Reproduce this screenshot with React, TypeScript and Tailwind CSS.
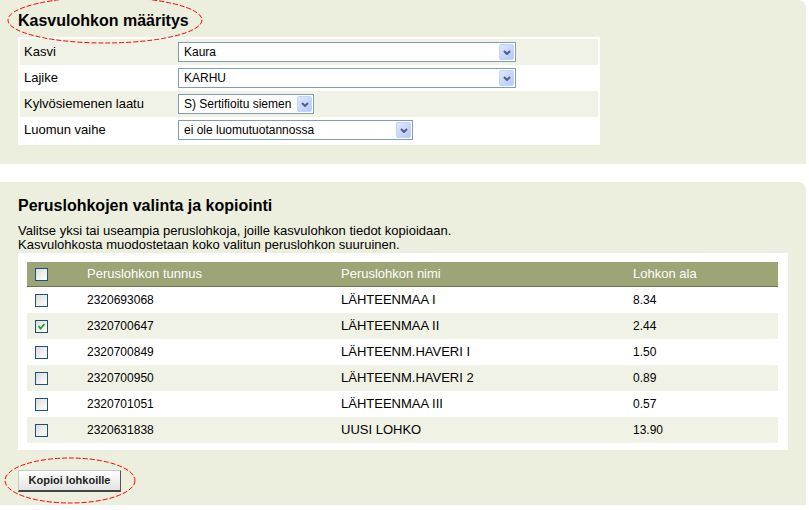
import { Fragment } from "react";

const fields = [
  { label: "Kasvi", value: "Kaura", w: "w-[338px]" },
  { label: "Lajike", value: "KARHU", w: "w-[338px]" },
  { label: "Kylvösiemenen laatu", value: "S) Sertifioitu siemen", w: "w-[136px]" },
  { label: "Luomun vaihe", value: "ei ole luomutuotannossa", w: "w-[235px]" },
];

const lohkot = [
  { id: "2320693068", name: "LÄHTEENMAA I", ala: "8.34", checked: false },
  { id: "2320700647", name: "LÄHTEENMAA II", ala: "2.44", checked: true },
  { id: "2320700849", name: "LÄHTEENM.HAVERI I", ala: "1.50", checked: false },
  { id: "2320700950", name: "LÄHTEENM.HAVERI 2", ala: "0.89", checked: false },
  { id: "2320701051", name: "LÄHTEENMAA III", ala: "0.57", checked: false },
  { id: "2320631838", name: "UUSI LOHKO", ala: "13.90", checked: false },
];

function Select({ value, w }: { value: string; w: string }) {
  return (
    <div className={`${w} h-[20px] border border-[#7f9db9] bg-white flex items-center justify-between pl-[5px] pr-[1px]`}>
      <span className="text-[12px] leading-none whitespace-nowrap">{value}</span>
      <span className="w-[15px] h-[16px] rounded-[2px] border border-[#c3d3fd] bg-gradient-to-br from-[#dfe8fd] to-[#b5c8f7] flex items-center justify-center">
        <svg width="8" height="5" viewBox="0 0 8 5">
          <polyline points="1,1 4,4 7,1" fill="none" stroke="#4d6185" strokeWidth="2" />
        </svg>
      </span>
    </div>
  );
}

function Checkbox({ checked }: { checked?: boolean }) {
  return (
    <span className="w-[13px] h-[13px] border border-[#1c5180] bg-gradient-to-br from-[#dcdcd7] to-white flex items-center justify-center">
      {checked && (
        <svg width="9" height="9" viewBox="0 0 9 9">
          <polyline points="1.5,4 3.5,6.5 7.5,2" fill="none" stroke="#21a121" strokeWidth="1.8" />
        </svg>
      )}
    </span>
  );
}

export default function App() {
  return (
    <div className="relative w-[809px] h-[510px] bg-white text-black font-['Liberation_Sans','Arial',sans-serif]">
      <section className="w-[806px] h-[164px] bg-[#eceede] rounded-tr-[8px] px-[18px]">
        <h1 className="pt-[11px] pb-[6px] text-[16px] leading-[20px] font-bold">Kasvulohkon määritys</h1>
        <div className="w-[582px] bg-white p-[2px]">
          {fields.map((f, i) => (
            <div key={f.label} className={`h-[26px] flex items-center ${i % 2 === 0 ? "bg-[#f1f2e6]" : "bg-white"}`}>
              <span className="w-[158px] pl-[4px] text-[13px]">{f.label}</span>
              <Select value={f.value} w={f.w} />
            </div>
          ))}
        </div>
      </section>

      <section className="mt-[18px] w-[806px] h-[323px] bg-[#eceede] rounded-tr-[8px] px-[18px]">
        <h2 className="pt-[14px] text-[16px] leading-[20px] font-bold">Peruslohkojen valinta ja kopiointi</h2>
        <p className="mt-[8px] text-[13px] leading-[14px]">
          Valitse yksi tai useampia peruslohkoja, joille kasvulohkon tiedot kopioidaan.
          <br />
          Kasvulohkosta muodostetaan koko valitun peruslohkon suuruinen.
        </p>
        <div className="mt-[1px] w-[770px] bg-white pt-[9px] pl-[9px] pr-[10px] pb-[7px]">
          <div className="grid grid-cols-[60px_254px_292px_1fr] text-[13px]">
            <div className="h-[25px] bg-[#9da476] border-b border-[#6f7550] pl-[8px] flex items-center">
              <Checkbox />
            </div>
            <div className="h-[25px] bg-[#9da476] border-b border-[#6f7550] text-white flex items-center">Peruslohkon tunnus</div>
            <div className="h-[25px] bg-[#9da476] border-b border-[#6f7550] text-white flex items-center">Peruslohkon nimi</div>
            <div className="h-[25px] bg-[#9da476] border-b border-[#6f7550] text-white flex items-center">Lohkon ala</div>
            {lohkot.map((r, i) => {
              const bg = i % 2 === 1 ? "bg-[#f1f2e6]" : "bg-white";
              return (
                <Fragment key={r.id}>
                  <div className={`h-[26px] ${bg} pl-[8px] flex items-center`}>
                    <Checkbox checked={r.checked} />
                  </div>
                  <div className={`h-[26px] ${bg} text-[12px] flex items-center`}>{r.id}</div>
                  <div className={`h-[26px] ${bg} flex items-center`}>{r.name}</div>
                  <div className={`h-[26px] ${bg} text-[12px] flex items-center`}>{r.ala}</div>
                </Fragment>
              );
            })}
          </div>
        </div>
        <button className="mt-[20px] w-[103px] h-[22px] border border-[#c8c8c8] border-r-[#555] border-b-2 border-b-[#444] bg-gradient-to-b from-white to-[#e3e3e3] text-[11px] font-bold text-[#222] flex items-center justify-center">
          Kopioi lohkoille
        </button>
      </section>

      <svg className="absolute left-0 top-0 pointer-events-none" width="809" height="510">
        <ellipse cx="105" cy="20" rx="97" ry="23" fill="none" stroke="#ff0000" strokeWidth="1" strokeDasharray="5 2" />
        <ellipse cx="70" cy="480.5" rx="65" ry="22.5" fill="none" stroke="#ff0000" strokeWidth="1" strokeDasharray="5 2" />
      </svg>
    </div>
  );
}
